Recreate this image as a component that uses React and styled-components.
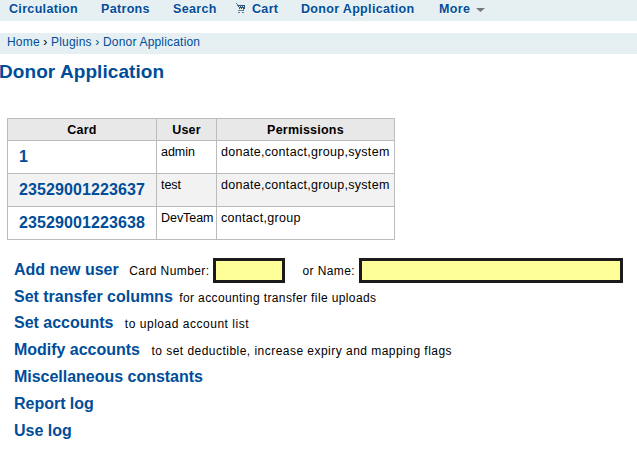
import React from "react";
import styled, { createGlobalStyle } from "styled-components";

const GlobalStyle = createGlobalStyle`
  * { box-sizing: border-box; }
  body {
    margin: 0;
    background: #fff;
    color: #000;
    font-family: "Liberation Sans", Arial, sans-serif;
    font-size: 12px;
    overflow: hidden;
  }
  a { color: #004d99; text-decoration: none; }
`;

const Toolbar = styled.nav`
  display: grid;
  grid-template-columns: 92px 72px 63px 65px 138px auto;
  height: 21px;
  padding-left: 9px;
  background: #e6eff2;
  white-space: nowrap;
`;

const NavLink = styled.a`
  display: flex;
  align-items: flex-start;
  font-size: 12.5px;
  font-weight: bold;
  line-height: 19px;
  letter-spacing: 0.33px;
  text-shadow: 0 1px 0 #fff;
`;

const CartIcon = styled.svg`
  width: 10px;
  height: 11px;
  margin: 3px 6px 0 0;
`;

const Caret = styled.svg`
  width: 9px;
  height: 4px;
  margin: 8px 0 0 6px;
`;

const Breadcrumbs = styled.div`
  height: 21px;
  margin-top: 12px;
  padding-left: 7px;
  background: #e6eff2;
  font-size: 12px;
  line-height: 18px;
  letter-spacing: 0.19px;
  white-space: pre;
`;

const Title = styled.h1`
  margin: 6px 0 0 -1px;
  color: #004d99;
  font-size: 19px;
  line-height: 24px;
  letter-spacing: 0.07px;
`;

const UserTable = styled.table`
  width: 388px;
  margin: 34px 0 0 7px;
  border-collapse: collapse;
  table-layout: fixed;
`;

const HeadCell = styled.th`
  width: ${({ $width }) => $width}px;
  height: 22px;
  padding: 0;
  border: 1px solid #bcbcbc;
  background: #e8e8e8;
  font-size: 12.5px;
  line-height: 20px;
  letter-spacing: 0.22px;
`;

const Row = styled.tr`
  height: 33px;
  background: ${({ $shaded }) => ($shaded ? "#f2f2f2" : "#fff")};
`;

const Cell = styled.td`
  padding: 3px 0 0 4px;
  border: 1px solid #bcbcbc;
  vertical-align: top;
  font-size: 12.5px;
  line-height: 16px;
  letter-spacing: ${({ $track = 0 }) => $track}px;
  white-space: nowrap;
`;

const CardCell = styled(Cell)`
  padding: 6px 0 0 11px;
  line-height: 20px;
`;

const ActionLink = styled.a`
  font-size: 16px;
  font-weight: bold;
  letter-spacing: ${({ $track = -0.02 }) => $track}px;
`;

const Actions = styled.div`
  display: flex;
  flex-direction: column;
  padding: 16px 0 0 14px;
`;

const Action = styled.div`
  display: flex;
  align-items: baseline;
  height: 26.8px;
  line-height: 27px;
  white-space: nowrap;

  &:nth-child(3) { line-height: 26px; }
`;

const Note = styled.span`
  margin-left: ${({ $gap }) => $gap}px;
  font-size: 12px;
  letter-spacing: ${({ $track = 0.4 }) => $track}px;
`;

const Field = styled.input`
  align-self: flex-start;
  width: ${({ $width }) => $width}px;
  height: 25px;
  margin: 2px 0 0 4px;
  padding: 0 4px;
  border: 3px solid #1c1a1a;
  border-radius: 0;
  outline: none;
  background: #ffff99;
`;

const users = [
  ["1", "admin", "donate,contact,group,system"],
  ["23529001223637", "test", "donate,contact,group,system"],
  ["23529001223638", "DevTeam", "contact,group"],
];

const actions = [
  { label: "Set transfer columns", note: "for accounting transfer file uploads", gap: 6.5, track: 0.38 },
  { label: "Set accounts", note: "to upload account list", gap: 11.5, track: 0.52 },
  { label: "Modify accounts", note: "to set deductible, increase expiry and mapping flags", gap: 11.5, track: 0.47 },
  { label: "Miscellaneous constants" },
  { label: "Report log" },
  { label: "Use log" },
];

export default function App() {
  return (
    <>
      <GlobalStyle />
      <Toolbar>
        <NavLink href="#">Circulation</NavLink>
        <NavLink href="#">Patrons</NavLink>
        <NavLink href="#">Search</NavLink>
        <NavLink href="#">
          <CartIcon viewBox="0 0 10 11" shapeRendering="crispEdges">
            <path d="M2 2h7v4H3v-2H2z" fill="#2c5378" />
            <path d="M0 0h1v1H0zM1 1h1v2H1zM7 6h1v1H7zM2 7h6v1H2zM2 9h2v1H2zM6 9h2v1H6z" fill="#5a7f9f" />
            <path d="M3 3h1v1H3zM5 3h1v1H5zM7 3h1v1H7zM4 5h1v1H4zM6 5h1v1H6z" fill="#f8edbd" />
          </CartIcon>
          Cart
        </NavLink>
        <NavLink href="#">Donor Application</NavLink>
        <NavLink href="#">
          More
          <Caret viewBox="0 0 9 4"><path d="M0 0h9L4.5 4z" fill="#777" /></Caret>
        </NavLink>
      </Toolbar>
      <Breadcrumbs>
        <a href="#">Home</a> › <a href="#">Plugins › Donor Application</a>
      </Breadcrumbs>
      <Title>Donor Application</Title>
      <UserTable>
        <thead>
          <tr>
            <HeadCell $width={149}>Card</HeadCell>
            <HeadCell $width={60}>User</HeadCell>
            <HeadCell>Permissions</HeadCell>
          </tr>
        </thead>
        <tbody>
          {users.map(([card, user, permissions], i) => (
            <Row key={card} $shaded={i === 1}>
              <CardCell><ActionLink href="#" $track={0.1}>{card}</ActionLink></CardCell>
              <Cell $track={-0.05}>{user}</Cell>
              <Cell $track={0.3}>{permissions}</Cell>
            </Row>
          ))}
        </tbody>
      </UserTable>
      <Actions>
        <Action>
          <ActionLink href="#">Add new user</ActionLink>
          <Note $gap={10.6}>Card Number:</Note>
          <Field $width={72} aria-label="Card Number" />
          <Note $gap={17}>or Name:</Note>
          <Field $width={264} aria-label="Name" />
        </Action>
        {actions.map(({ label, note, gap, track }) => (
          <Action key={label}>
            <ActionLink href="#">{label}</ActionLink>
            {note && <Note $gap={gap} $track={track}>{note}</Note>}
          </Action>
        ))}
      </Actions>
    </>
  );
}
